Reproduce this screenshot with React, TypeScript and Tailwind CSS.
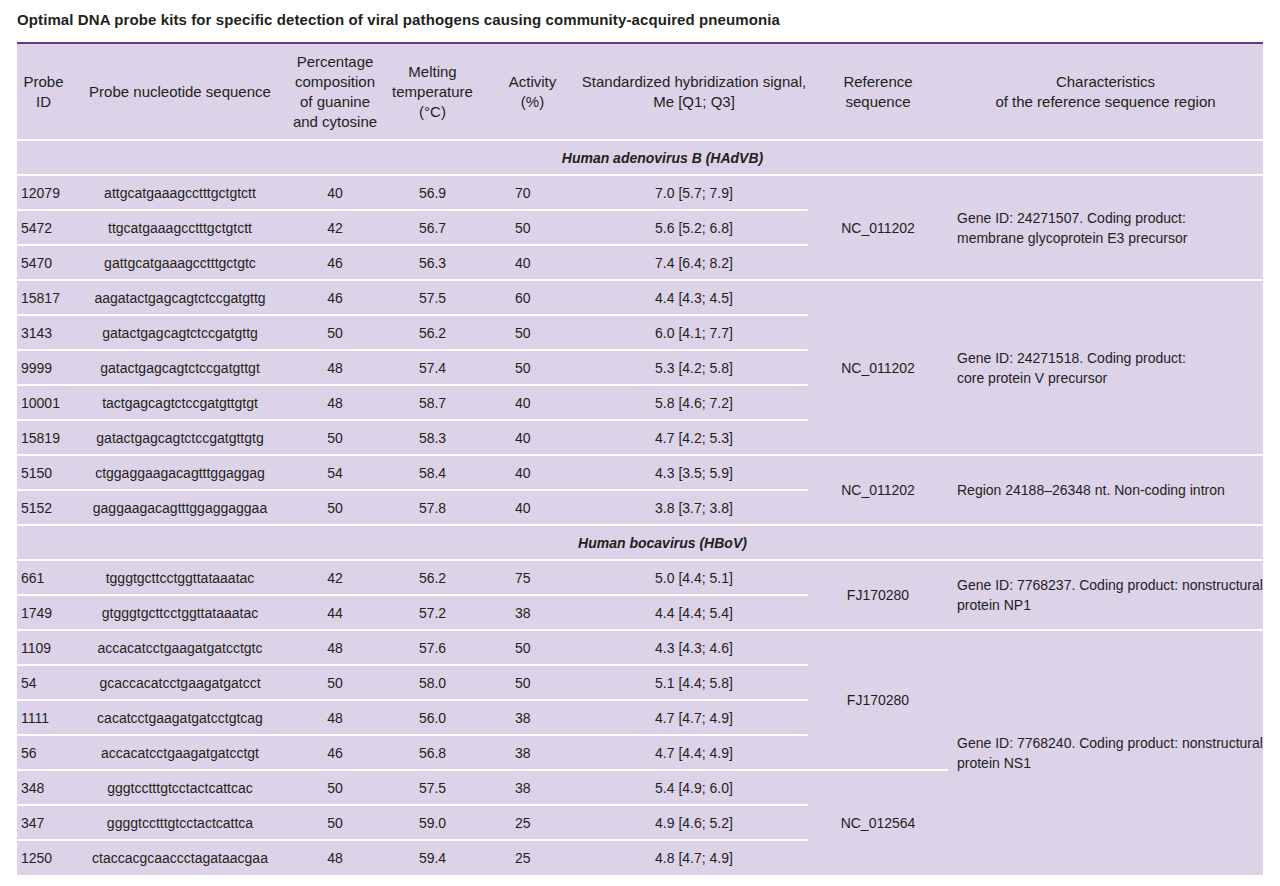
const groups = [
  {
    name: "Human adenovirus B (HAdVB)",
    rows: [
      ["12079", "attgcatgaaagcctttgctgtctt", "40", "56.9", "70", "7.0 [5.7; 7.9]"],
      ["5472", "ttgcatgaaagcctttgctgtctt", "42", "56.7", "50", "5.6 [5.2; 6.8]"],
      ["5470", "gattgcatgaaagcctttgctgtc", "46", "56.3", "40", "7.4 [6.4; 8.2]"],
      ["15817", "aagatactgagcagtctccgatgttg", "46", "57.5", "60", "4.4 [4.3; 4.5]"],
      ["3143", "gatactgagcagtctccgatgttg", "50", "56.2", "50", "6.0 [4.1; 7.7]"],
      ["9999", "gatactgagcagtctccgatgttgt", "48", "57.4", "50", "5.3 [4.2; 5.8]"],
      ["10001", "tactgagcagtctccgatgttgtgt", "48", "58.7", "40", "5.8 [4.6; 7.2]"],
      ["15819", "gatactgagcagtctccgatgttgtg", "50", "58.3", "40", "4.7 [4.2; 5.3]"],
      ["5150", "ctggaggaagacagtttggaggag", "54", "58.4", "40", "4.3 [3.5; 5.9]"],
      ["5152", "gaggaagacagtttggaggaggaa", "50", "57.8", "40", "3.8 [3.7; 3.8]"],
    ],
    refs: [
      [0, 3, "NC_011202"],
      [3, 5, "NC_011202"],
      [8, 2, "NC_011202"],
    ] as [number, number, string][],
    chars: [
      [0, 3, "Gene ID: 24271507. Coding product:", "membrane glycoprotein E3 precursor"],
      [3, 5, "Gene ID: 24271518. Coding product:", "core protein V precursor"],
      [8, 2, "Region 24188–26348 nt. Non-coding intron", ""],
    ] as [number, number, string, string][],
  },
  {
    name: "Human bocavirus (HBoV)",
    rows: [
      ["661", "tgggtgcttcctggttataaatac", "42", "56.2", "75", "5.0 [4.4; 5.1]"],
      ["1749", "gtgggtgcttcctggttataaatac", "44", "57.2", "38", "4.4 [4.4; 5.4]"],
      ["1109", "accacatcctgaagatgatcctgtc", "48", "57.6", "50", "4.3 [4.3; 4.6]"],
      ["54", "gcaccacatcctgaagatgatcct", "50", "58.0", "50", "5.1 [4.4; 5.8]"],
      ["1111", "cacatcctgaagatgatcctgtcag", "48", "56.0", "38", "4.7 [4.7; 4.9]"],
      ["56", "accacatcctgaagatgatcctgt", "46", "56.8", "38", "4.7 [4.4; 4.9]"],
      ["348", "gggtcctttgtcctactcattcac", "50", "57.5", "38", "5.4 [4.9; 6.0]"],
      ["347", "ggggtcctttgtcctactcattca", "50", "59.0", "25", "4.9 [4.6; 5.2]"],
      ["1250", "ctaccacgcaaccctagataacgaa", "48", "59.4", "25", "4.8 [4.7; 4.9]"],
    ],
    refs: [
      [0, 2, "FJ170280"],
      [2, 4, "FJ170280"],
      [6, 3, "NC_012564"],
    ] as [number, number, string][],
    chars: [
      [0, 2, "Gene ID: 7768237. Coding product: nonstructural", "protein NP1"],
      [2, 7, "Gene ID: 7768240. Coding product: nonstructural", "protein NS1"],
    ] as [number, number, string, string][],
  },
];

const td = "h-[35px] border-t-2 border-white text-center align-middle whitespace-nowrap";

export default function App() {
  return (
    <div
      className="w-[1280px] h-[886px] bg-white text-[#231f20] overflow-hidden"
      style={{ fontFamily: '"Liberation Sans Narrow", "Liberation Sans", Arial, sans-serif' }}
    >
      <h1 className="pl-[17px] pt-[9px] h-[42px] text-[15px] font-bold tracking-[0.1px]">
        Optimal DNA probe kits for specific detection of viral pathogens causing community-acquired pneumonia
      </h1>
      <table className="ml-[17px] w-[1246px] border-collapse border-t-2 border-[#5c3b8c] bg-[#dcd3e8] text-[14px] leading-[20px] table-fixed">
        <colgroup>
          <col className="w-[53px]" />
          <col className="w-[220px]" />
          <col className="w-[90px]" />
          <col className="w-[105px]" />
          <col className="w-[95px]" />
          <col className="w-[228px]" />
          <col className="w-[140px]" />
          <col />
        </colgroup>
        <thead>
          <tr className="h-[97px] text-[15px] leading-[20px]">
            <th className="font-normal">Probe<br />ID</th>
            <th className="font-normal">Probe nucleotide sequence</th>
            <th className="font-normal">Percentage composition of guanine and cytosine</th>
            <th className="font-normal">Melting temperature (°C)</th>
            <th className="font-normal">Activity<br />(%)</th>
            <th className="font-normal">Standardized hybridization signal,<br />Me [Q1; Q3]</th>
            <th className="font-normal">Reference<br />sequence</th>
            <th className="font-normal">Characteristics<br />of the reference sequence region</th>
          </tr>
        </thead>
        <tbody>
          {groups.map((g) => [
            <tr key={g.name}>
              <td colSpan={8} className={td + " italic font-bold pl-[45px]"}>{g.name}</td>
            </tr>,
            ...g.rows.map((r, i) => {
              const ref = g.refs.find((x) => x[0] === i);
              const ch = g.chars.find((x) => x[0] === i);
              return (
                <tr key={g.name + r[0]}>
                  <td className={td + " !text-left pl-[4px]"}>{r[0]}</td>
                  <td className={td}>{r[1]}</td>
                  <td className={td}>{r[2]}</td>
                  <td className={td}>{r[3]}</td>
                  <td className={td + " !text-left pl-[30px]"}>{r[4]}</td>
                  <td className={td}>{r[5]}</td>
                  {ref && <td rowSpan={ref[1]} className={td}>{ref[2]}</td>}
                  {ch && (
                    <td rowSpan={ch[1]} className={td + " !text-left pl-[9px] pr-[4px]"}>
                      {ch[2]}
                      {ch[3] && <br />}
                      {ch[3]}
                    </td>
                  )}
                </tr>
              );
            }),
          ])}
        </tbody>
      </table>
    </div>
  );
}
